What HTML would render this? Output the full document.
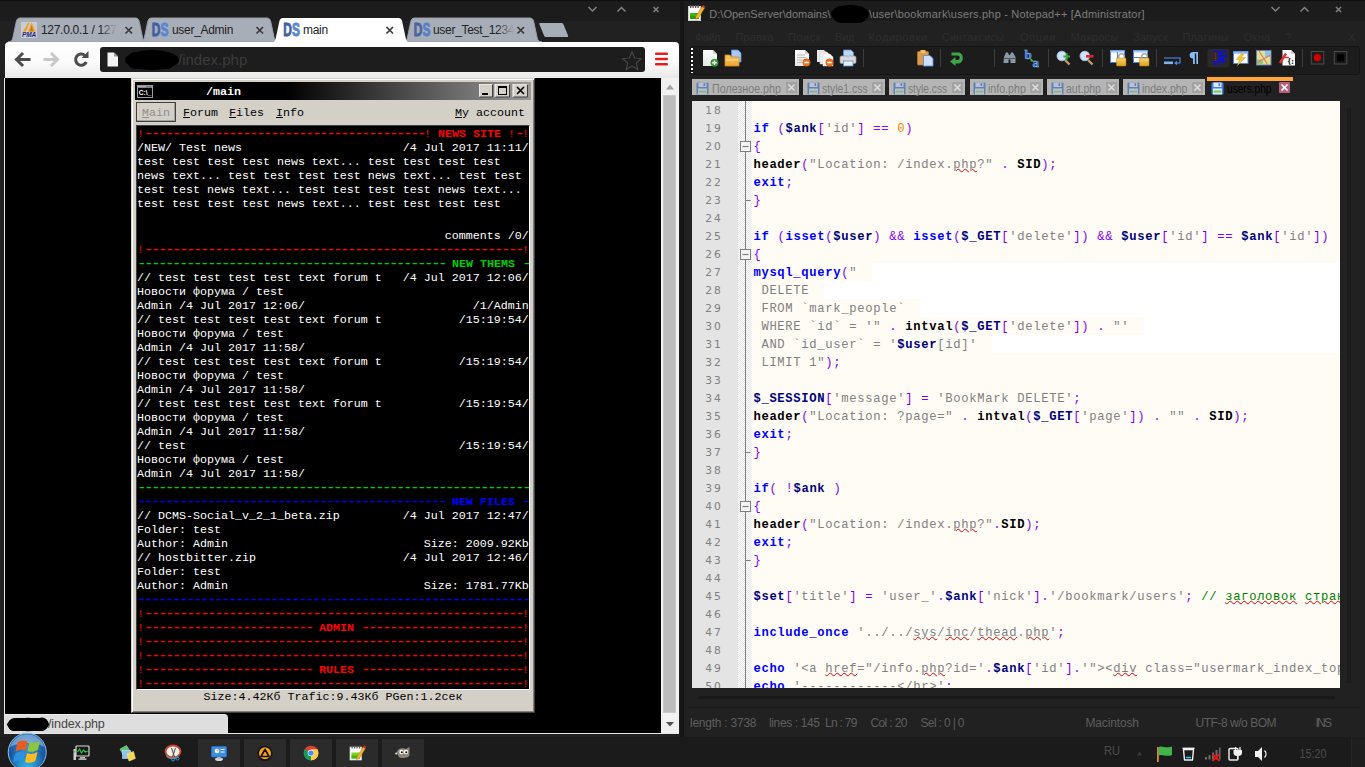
<!DOCTYPE html>
<html lang="ru">
<head>
<meta charset="utf-8">
<title>main</title>
<style>
*{box-sizing:border-box;margin:0;padding:0}
html,body{width:1365px;height:767px;overflow:hidden;background:#1d1d1d}
body{position:relative;font-family:"Liberation Sans",sans-serif;font-size:12px;color:#222}
.abs{position:absolute}
/* ---------- chrome window ---------- */
#chrome{position:absolute;left:0;top:0;width:683px;height:737px;background:linear-gradient(#0e0e0e 0,#0e0e0e 1px,#1c1c1c 1px,#1c1c1c 21px,#212121 21px);overflow:hidden}
#chrome .tabtxt{position:absolute;top:22px;font-size:12px;line-height:16px;color:#222;white-space:nowrap;overflow:hidden;letter-spacing:-0.3px}
#chrome .tabx{position:absolute;top:22px;font-size:13px;line-height:16px;color:#333;font-weight:bold}
#ctoolbar{position:absolute;left:5px;top:42px;width:674px;height:36px;background:linear-gradient(#ffffff 0,#fbfbfb 55%,#e9e9e9 100%);border-radius:4px 4px 0 0}
#omni{position:absolute;left:95px;top:5px;width:545px;height:25px;background:#1d1d1d;border-radius:3px}
#omni .url{position:absolute;left:78px;top:3px;font-size:15px;line-height:20px;color:#3b3b3b}
#page{position:absolute;left:5px;top:78px;width:656px;height:655px;background:#000;overflow:hidden}
#vscroll{position:absolute;left:661px;top:78px;width:18px;height:656px;background:#f1f1f1}
#vscroll .thumb{position:absolute;left:2px;top:17px;width:13px;height:618px;background:#bcbcbc;border:1px solid #c8c8c8}
#bubble{position:absolute;left:5px;top:714px;width:223px;height:19px;background:#dedede;border-top-right-radius:4px;font-size:12.500px;line-height:20px;color:#444;border-top:1px solid #ececec}
#pgline{position:absolute;left:4px;top:733px;width:675px;height:1px;background:#e6e6e6}
#pgleft{position:absolute;left:4px;top:78px;width:1px;height:656px;background:#e6e6e6}
/* ---------- dcms window ---------- */
#dw{position:absolute;left:126px;top:0;width:404px;height:635px;background:#d4d0c8;border:1px solid #d4d0c8;border-right-color:#404040;border-bottom-color:#404040;box-shadow:inset 1px 1px 0 #fff,inset -1px -1px 0 #808080}
#dw .tbar{position:absolute;left:3px;top:3px;width:396px;height:18px;background:linear-gradient(90deg,#000 0,#000 38%,#9a9a9a 100%)}
#dw .ttl{position:absolute;left:71px;top:3px;font:bold 11.67px/14px "Liberation Mono",monospace;color:#fff}
#dw .menu{position:absolute;top:27px;font:11.67px/14px "Liberation Mono",monospace;color:#000;white-space:pre}
#dw .menu u{text-decoration:underline}
#con{position:absolute;left:4px;top:46px;width:394px;height:565px;background:#000;border:1px solid #404040;border-right-color:#fff;border-bottom-color:#fff;overflow:hidden}
#con pre{position:absolute;left:0;margin-top:1px;font:11.67px/14px "Liberation Mono",monospace;color:#fff;white-space:pre;letter-spacing:0}
#con .d{font-size:16px;letter-spacing:-2.6px;line-height:0;vertical-align:-1px}
#con .r{color:#f00}#con .g{color:#0c0}#con .b{color:#00f}
#dw .foot{position:absolute;left:0;top:611px;width:402px;text-align:center;font:11.67px/14px "Liberation Mono",monospace;color:#000}
/* ---------- taskbar ---------- */
#task{position:absolute;left:0;top:737px;width:1365px;height:30px;background:#1b1b1b}
#task .run{position:absolute;top:1px;width:42px;height:29px;background:#2b2b2b}
/* ---------- notepad++ ---------- */
#npp{position:absolute;left:683px;top:0;width:682px;height:737px;background:linear-gradient(#0e0e0e 0,#0e0e0e 1px,#1c1c1c 1px,#1c1c1c 21px,#212121 21px);overflow:hidden}
#npp .title{position:absolute;top:5px;font-size:11px;line-height:18px;color:#7d7d7d;white-space:pre}
#npp .mi{position:absolute;top:28px;font-size:11px;line-height:18px;color:#2e2e2e;white-space:pre}
#npp .ntab{position:absolute;top:79px;height:16px;background:#b5b5b5}
#npp .ntxt{position:absolute;top:81px;transform-origin:0 50%;font-size:13px;line-height:16px;color:#7c7c7c;white-space:pre}
#ed{position:absolute;left:9px;top:101px;width:648px;height:587px;background:#fffcf5;overflow:hidden}
#ed .ln{position:absolute;left:0;top:0;width:46px;height:100%;background:#e4e4e4}
#ed .fm{position:absolute;left:46px;top:0;width:14px;height:100%;background:conic-gradient(#e4e4e4 25%,#fff 0 50%,#e4e4e4 0 75%,#fff 0) 0 0/2px 2px}
#ed .num{position:absolute;left:0;margin-top:1px;width:30.5px;text-align:right;font:10.7px/18px "DejaVu Sans","Liberation Sans",sans-serif;color:#808080;letter-spacing:1.8px}
#ed .cl{position:absolute;left:61.400px;margin-top:1px;height:18px;font:12.200px/18px "Liberation Mono",monospace;letter-spacing:0.680px;white-space:pre;color:#000}
#ed .k{color:#00f;font-weight:bold}#ed .v{color:#000080;font-weight:bold}#ed .s{color:#808080}
#ed .o{color:#8000ff}#ed .n{color:#ff8000}#ed .f{color:#000;font-weight:bold}#ed .c{color:#008000}
#ed .sq{text-decoration:underline wavy #e00000;text-decoration-thickness:1px;text-underline-offset:0px}
#nstatus{position:absolute;left:0;top:708px;width:682px;height:29px;font-size:12px;line-height:31px;color:#5e5e5e}
#nstatus span{position:absolute;top:0;white-space:pre}
</style>
</head>
<body>
<!--CHROME-->
<div id="chrome">
<svg class="abs" style="left:0;top:0" width="683" height="43" viewBox="0 0 683 43">

<!-- inactive tabs -->
<path d="M402.5 42 C405.5 42 406.5 40.5 407.3 38 L410.8 21.500 C411.3 19.500 412.3 18 414.5 18 L530.0 18 C532.2 18 533.2 19.500 533.7 21.500 L537.2 38 C538.0 40.500 539.0 42 542.0 42 Z" fill="#a8aeb8" stroke="#979da7" stroke-width="1"/>
<path d="M139.5 42 C142.5 42 143.5 40.5 144.3 38 L147.8 21.500 C148.3 19.500 149.3 18 151.5 18 L267.0 18 C269.2 18 270.2 19.500 270.7 21.500 L274.2 38 C275.0 40.500 276.0 42 279.0 42 Z" fill="#a8aeb8" stroke="#979da7" stroke-width="1"/>
<path d="M8.0 42 C11.0 42 12.0 40.5 12.8 38 L16.3 21.500 C16.8 19.500 17.8 18 20.0 18 L135.5 18 C137.7 18 138.7 19.500 139.2 21.500 L142.7 38 C143.5 40.500 144.5 42 147.5 42 Z" fill="#a8aeb8" stroke="#979da7" stroke-width="1"/>
<!-- active tab -->
<path d="M271.0 43 C274.0 43 275.0 40.5 275.8 38 L279.3 21.500 C279.8 19.500 280.8 18 283.0 18 L398.5 18 C400.7 18 401.7 19.500 402.2 21.500 L405.7 38 C406.5 40.500 407.5 43 410.5 43 Z" fill="#ffffff"/>
<!-- new tab button -->
<path d="M539.500 24.500 C539 23.500 539.500 23 540.500 23 L561 23 C562.500 23 563 23.500 563.500 24.500 L568 35.500 C568.400 36.800 568 37 567 37 L546.500 37 C545 37 544.500 36.500 544 35.500 Z" fill="#a8aeb8"/>
<!-- window controls -->
<g fill="none" stroke="#808080" stroke-width="1.5">
<path d="M588.500 7 L592.500 11 L596.500 7"/>
<path d="M617.500 11.500 L621.500 7.500 L625.500 11.500"/>
<path d="M653.500 7 L658.500 12 M658.500 7 L653.500 12"/>
</g>
<!-- PMA favicon -->
<rect x="21" y="22" width="16" height="16" fill="#c9ccd3"/>
<path d="M23 31.500 L28 23 L29.500 23 L26 31.500 Z M28 31.500 L31.500 22.500 L35.500 31.500 Z" fill="#f0a020"/>
<path d="M29.700 31.500 L31.500 25 L33.500 31.500 Z" fill="#c77c0c"/>
<!-- DS favicons -->
<g style="font-family:'Liberation Sans',sans-serif;font-weight:bold;font-size:17.500px" stroke-width="0.900" transform="scale(0.68 1)">
<text x="223" y="36.500" fill="#3f5f9f" stroke="#3f5f9f">D</text><text x="236" y="36.500" fill="#5b86d2" stroke="#5b86d2">S</text>
<text x="416.500" y="36.500" fill="#3f5f9f" stroke="#3f5f9f">D</text><text x="429.500" y="36.500" fill="#5b86d2" stroke="#5b86d2">S</text>
<text x="608.500" y="36.500" fill="#4a64a0" stroke="#4a64a0">D</text><text x="621.500" y="36.500" fill="#5a80cc" stroke="#5a80cc">S</text>
</g>
</svg>
<div class="abs" style="left:21px;top:32px;width:16px;font:bold 6.500px/6px 'Liberation Sans',sans-serif;color:#2a2a7a;letter-spacing:-0.2px;text-align:center;font-style:italic">PMA</div>
<div class="tabtxt" style="left:41px;width:75px">127.0.0.1 / 127.</div>
<div class="tabtxt" style="left:172px">user_Admin</div>
<div class="tabtxt" style="left:303px">main</div>
<div class="tabtxt" style="left:433px;width:81px">user_Test_1234</div>
<div class="abs" style="left:100px;top:20px;width:17px;height:20px;background:linear-gradient(90deg,rgba(168,174,184,0),#a8aeb8)"></div>
<div class="abs" style="left:497px;top:20px;width:17px;height:20px;background:linear-gradient(90deg,rgba(168,174,184,0),#a8aeb8)"></div>
<svg class="abs" style="left:0;top:0" width="683" height="43" viewBox="0 0 683 43"><g fill="none" stroke="#3a3a3a" stroke-width="1.700">
<path d="M125.500 27 L132 33.500 M132 27 L125.500 33.500"/>
<path d="M256.500 27 L263 33.500 M263 27 L256.500 33.500"/>
<path d="M386.500 27 L393 33.500 M393 27 L386.500 33.500"/>
<path d="M517.500 27 L524 33.500 M524 27 L517.500 33.500"/>
</g></svg>

<div id="ctoolbar">
<svg class="abs" style="left:0;top:-1px" width="674" height="37" viewBox="0 0 674 37">
<!-- back -->
<path d="M11.500 18.500 L17 13 M11.500 18.500 L17 24 M12 18.500 L24 18.500" fill="none" stroke="#4c4c4c" stroke-width="3" stroke-linecap="square"/>
<!-- forward -->
<path d="M52.500 18.500 L47 13 M52.500 18.500 L47 24 M52 18.500 L40 18.500" fill="none" stroke="#c8c8c8" stroke-width="3" stroke-linecap="square"/>
<!-- reload -->
<path d="M79.800 14.300 A5.600 5.600 0 1 0 81.300 21" fill="none" stroke="#4c4c4c" stroke-width="3"/>
<path d="M76.500 17 L83.500 17 L83.500 10 Z" fill="#4c4c4c"/>
<!-- hamburger -->
<g fill="#e02020"><rect x="650" y="11.500" width="13" height="2.600" rx="1"/><rect x="650" y="16.700" width="13" height="2.600" rx="1"/><rect x="650" y="21.900" width="13" height="2.600" rx="1"/></g>
</svg>
<div id="omni">
<svg class="abs" style="left:0;top:-0.5px" width="545" height="26" viewBox="0 0 545 26">
<path d="M7.500 5.500 L14 5.500 L18 9.500 L18 19.500 L7.500 19.500 Z" fill="#f4f4f4"/>
<path d="M14 5.500 L14 9.500 L18 9.500 Z" fill="#9a9a9a"/>
<ellipse cx="52" cy="13" rx="27" ry="10" fill="#000"/>
<rect x="28" y="5" width="46" height="17" rx="7" fill="#000"/>
<path d="M532 4.500 L534.600 11 L541.500 11.500 L536.200 16 L538 22.800 L532 19 L526 22.800 L527.800 16 L522.500 11.500 L529.400 11 Z" fill="none" stroke="#444" stroke-width="1.200" stroke-linejoin="round"/>
</svg>
<div class="url">/index.php</div>
</div>

</div>
<div id="page">
<div id="dw">
<div class="tbar">
<svg class="abs" style="left:2px;top:3px" width="16" height="13" viewBox="0 0 16 13"><rect x="0.5" y="0.5" width="15" height="12" fill="#000" stroke="#9c9ca4"/><rect x="1" y="1" width="14" height="1.800" fill="#a8a8b0"/><rect x="9.500" y="1.300" width="1" height="1" fill="#334"/><rect x="11.500" y="1.300" width="1" height="1" fill="#334"/><rect x="13.300" y="1.300" width="1" height="1" fill="#334"/><g style="font:bold 6.500px 'Liberation Sans',sans-serif" fill="#fff"><text x="1.800" y="10" textLength="12.500" lengthAdjust="spacingAndGlyphs">C:\_</text></g></svg>
<div class="ttl">/main</div>
<svg class="abs" style="left:344px;top:2px" width="50" height="14" viewBox="0 0 50 14">
<g><rect x="0" y="0" width="14" height="13" fill="#d4d0c8"/><path d="M0 13 L0 0 L14 0" fill="none" stroke="#fff"/><path d="M0.5 13 L13.500 13 L13.500 0.500" fill="none" stroke="#404040"/><rect x="3" y="9" width="6" height="2" fill="#000"/></g>
<g transform="translate(16 0)"><rect x="0" y="0" width="15" height="13" fill="#d4d0c8"/><path d="M0 13 L0 0 L15 0" fill="none" stroke="#fff"/><path d="M0.5 13 L14.500 13 L14.500 0.500" fill="none" stroke="#404040"/><rect x="3.500" y="2.500" width="8" height="8" fill="none" stroke="#000"/><rect x="3" y="2" width="9" height="2" fill="#000"/></g>
<g transform="translate(34 0)"><rect x="0" y="0" width="15" height="13" fill="#d4d0c8"/><path d="M0 13 L0 0 L15 0" fill="none" stroke="#fff"/><path d="M0.5 13 L14.500 13 L14.500 0.500" fill="none" stroke="#404040"/><path d="M4 3 L11 10 M11 3 L4 10" stroke="#000" stroke-width="1.600"/></g>
</svg>
</div>
<div class="abs" style="left:4px;top:23px;width:40px;height:20px;border:1px solid #404040;box-shadow:inset -1px -1px 0 #a0a0a0"></div>
<div class="menu" style="left:10px;color:#8e8e8e"><u>M</u>ain</div>
<div class="menu" style="left:51px"><u>F</u>orum</div>
<div class="menu" style="left:97px"><u>F</u>iles</div>
<div class="menu" style="left:144px"><u>I</u>nfo</div>
<div class="menu" style="left:323px"><u>M</u>y account</div>
<div id="con">
<pre style="top:0"><span class="r">!<span class="d">----------------------------------------</span>! <b>NEWS SITE</b> !<span class="d">-</span>!</span>
/NEW/ Test news                       /4 Jul 2017 11:11/
test test test test news text... test test test test
news text... test test test test news text... test test
test test news text... test test test test news text...
test test test test news text... test test test test</pre>
<pre style="top:102px">                                            comments /0/</pre>
<pre style="top:116px"><span class="r">!<span class="d">------------------------------------------------------</span>!</span>
<span class="g"><span class="d">--------------------------------------------</span> <b>NEW THEMS</b> <span class="d">-</span></span>
// test test test test text forum t   /4 Jul 2017 12:06/
Новости форума / test
Admin /4 Jul 2017 12:06/                        /1/Admin
// test test test test text forum t           /15:19:54/
Новости форума / test
Admin /4 Jul 2017 11:58/
// test test test test text forum t           /15:19:54/
Новости форума / test
Admin /4 Jul 2017 11:58/
// test test test test text forum t           /15:19:54/
Новости форума / test
Admin /4 Jul 2017 11:58/
// test                                       /15:19:54/
Новости форума / test
Admin /4 Jul 2017 11:58/
<span class="g"><span class="d">--------------------------------------------------------</span></span>
<span class="b"><span class="d">--------------------------------------------</span> <b>NEW FILES</b> <span class="d">-</span></span>
// DCMS-Social_v_2_1_beta.zip         /4 Jul 2017 12:47/
Folder: test
Author: Admin                            Size: 2009.92Kb
// hostbitter.zip                     /4 Jul 2017 12:46/
Folder: test
Author: Admin                            Size: 1781.77Kb
<span class="b"><span class="d">--------------------------------------------------------</span></span>
<span class="r">!<span class="d">------------------------------------------------------</span>!</span>
<span class="r">!<span class="d">------------------------</span> <b>ADMIN</b> <span class="d">-----------------------</span>!</span>
<span class="r">!<span class="d">------------------------------------------------------</span>!</span>
<span class="r">!<span class="d">------------------------------------------------------</span>!</span>
<span class="r">!<span class="d">------------------------</span> <b>RULES</b> <span class="d">-----------------------</span>!</span>
<span class="r">!<span class="d">------------------------------------------------------</span>!</span></pre>
</div>
<div class="foot">Size:4.42Кб Trafic:9.43Кб PGen:1.2сек</div>
</div>

</div>
<div id="vscroll"><div class="thumb"></div>
<svg class="abs" style="left:0;top:0" width="18" height="656" viewBox="0 0 18 656"><path d="M5 11.500 L9 6.500 L13 11.500 Z" fill="#a3a3a3"/><path d="M5 644 L9 648.500 L13 644 Z" fill="#505050"/></svg>

</div>
<div class="abs" style="left:680px;top:1px;width:3px;height:736px;background:#161616"></div>
<div id="pgline"></div><div id="pgleft"></div>
<div id="bubble">
<svg class="abs" style="left:0;top:-1px" width="50" height="20" viewBox="0 0 50 20"><ellipse cx="23" cy="10.500" rx="21" ry="6.800" fill="#000"/><rect x="3" y="4" width="40" height="13" rx="6.500" fill="#000"/><circle cx="9" cy="11" r="6" fill="#000"/><circle cx="37" cy="10" r="6.500" fill="#000"/></svg><span style="position:absolute;left:43px;top:-1px;letter-spacing:-0.1px">/index.php</span>

</div>
</div>
<!--NPP-->
<div id="npp">
<div class="abs" style="left:0;top:0;width:1px;height:737px;background:#141414"></div>
<svg class="abs" style="left:5px;top:4px" width="18" height="18" viewBox="0 0 18 18">
<rect x="0.5" y="2.500" width="12" height="14" fill="#fff" stroke="#cfcfcf"/>
<g fill="#555"><rect x="2" y="1" width="1.300" height="3"/><rect x="4.500" y="1" width="1.300" height="3"/><rect x="7" y="1" width="1.300" height="3"/><rect x="9.500" y="1" width="1.300" height="3"/></g>
<rect x="2" y="9" width="9" height="6" fill="#3cb414"/><rect x="2" y="12" width="9" height="3" fill="#2a9a0a"/>
<path d="M8 12.500 L14 2.500 L16.500 4 L10.500 14 L7.600 15.200 Z" fill="#f3b52e" stroke="#b77a12" stroke-width="0.600"/>
<path d="M14 2.500 L15 1 L17.300 2.400 L16.500 4 Z" fill="#d8262c"/>
</svg>
<div class="title" style="left:26.3px;letter-spacing:0.01px;">D:\OpenServer\domains\</div>
<div class="title" style="left:186.0px;letter-spacing:0.20px;">\user\bookmark\users.php - Notepad++ [Administrator]</div>
<svg class="abs" style="left:146px;top:3px" width="44" height="22" viewBox="0 0 44 22"><ellipse cx="21" cy="11" rx="19" ry="9" fill="#000"/><rect x="4" y="3" width="34" height="17" rx="8" fill="#000"/></svg>
<svg class="abs" style="left:580px;top:0" width="102" height="20" viewBox="0 0 102 20"><g fill="none" stroke="#808080" stroke-width="1.500">
<path d="M8.500 7 L12.500 11 L16.500 7"/><path d="M37.500 11.500 L41.500 7.500 L45.500 11.500"/><path d="M73 7 L78 12 M78 7 L73 12"/></g></svg>
<div class="mi" style="left:12.0px;letter-spacing:-0.52px;">Файл</div>
<div class="mi" style="left:52.5px;letter-spacing:0.17px;">Правка</div>
<div class="mi" style="left:105.0px;letter-spacing:0.50px;">Поиск</div>
<div class="mi" style="left:152.0px;letter-spacing:-0.20px;">Вид</div>
<div class="mi" style="left:185.5px;letter-spacing:0.58px;">Кодировки</div>
<div class="mi" style="left:258.7px;letter-spacing:0.12px;">Синтаксисы</div>
<div class="mi" style="left:337.0px;letter-spacing:0.57px;">Опции</div>
<div class="mi" style="left:387.6px;letter-spacing:0.32px;">Макросы</div>
<div class="mi" style="left:450.3px;letter-spacing:-0.00px;">Запуск</div>
<div class="mi" style="left:499.4px;letter-spacing:0.28px;">Плагины</div>
<div class="mi" style="left:560.7px;letter-spacing:0.35px;">Окна</div>
<div class="mi" style="left:602.3px;letter-spacing:0.00px;">?</div>
<div class="mi" style="left:665.0px;letter-spacing:0.00px;">X</div>
<div class="abs" style="left:7px;top:46px;width:670px;height:29px;border:1px solid #151515;border-radius:3px;background:#1c1c1c"></div>
<div class="abs" style="left:8px;top:48px;width:2px;height:25px;background:repeating-linear-gradient(#fff 0,#fff 2px,transparent 2px,transparent 4px)"></div>
<svg class="abs" style="left:0;top:44px" width="682" height="34" viewBox="683 44 682 34">
<defs>
<linearGradient id="gpg" x1="0" y1="0" x2="0" y2="1"><stop offset="0" stop-color="#fff"/><stop offset="1" stop-color="#e6e6e6"/></linearGradient>
<linearGradient id="gfo" x1="0" y1="0" x2="0" y2="1"><stop offset="0" stop-color="#f7c35a"/><stop offset="1" stop-color="#f0a630"/></linearGradient>
<linearGradient id="glk" x1="0" y1="0" x2="0" y2="1"><stop offset="0" stop-color="#f8d470"/><stop offset="1" stop-color="#e0a020"/></linearGradient>
</defs>
<!-- separators -->
<g stroke="#3c3c3c" stroke-width="1"><path d="M863.500 49 V67 M940.500 49 V67 M994.500 49 V67 M1048.500 49 V67 M1102.500 49 V67 M1156.500 49 V67 M1302.500 49 V67"/></g>
<!-- new -->
<path d="M703 50 H713 L717 54 V66 H703 Z" fill="url(#gpg)"/><path d="M713 50 V54 H717 Z" fill="#d0d0d0"/>
<circle cx="714.500" cy="62.800" r="3.700" fill="#3aa53a" stroke="#2a7f2a" stroke-width="0.600"/><path d="M712.300 62.800 H716.700 M714.500 60.600 V65" stroke="#fff" stroke-width="1.400"/>
<!-- open -->
<path d="M731.500 50 H738 L741 53 V62 H731.500 Z" fill="#a9c8f5" stroke="#5b8ee0" stroke-width="0.800"/>
<path d="M725 55 H730 L731.500 57 H739 V66 H725 Z" fill="url(#gfo)" stroke="#d68a1c" stroke-width="0.800"/><path d="M725.500 60 H738.500" stroke="#fbe2a5" stroke-width="1"/>
<!-- close -->
<path d="M795 50 H805 L809 54 V66 H795 Z" fill="url(#gpg)"/><path d="M805 50 V54 H809 Z" fill="#cfcfcf"/>
<path d="M797 55 H805 M797 57.500 H806 M797 60 H803 M797 62.500 H802" stroke="#b5b5b5" stroke-width="0.900"/>
<circle cx="806.500" cy="62.500" r="3.700" fill="#ee7420" stroke="#c45510" stroke-width="0.600"/><path d="M804.300 62.500 H808.700" stroke="#fff" stroke-width="1.500"/>
<!-- close all -->
<path d="M817 50 H824 L827 53 V62 H817 Z" fill="#e9e9e9"/><path d="M820 52 H827 L830 55 V64 H820 Z" fill="#f1f1f1" stroke="#cfcfcf" stroke-width="0.500"/><path d="M823 54 H830 L833 57 V66 H823 Z" fill="#fff" stroke="#cfcfcf" stroke-width="0.500"/>
<circle cx="829.500" cy="62.500" r="3.700" fill="#ee7420" stroke="#c45510" stroke-width="0.600"/><path d="M827.300 62.500 H831.700" stroke="#fff" stroke-width="1.500"/>
<!-- print -->
<path d="M843.500 50 H851 L853.500 52.500 V57 H843.500 Z" fill="#bcd7f7" stroke="#5b8ee0" stroke-width="0.800"/>
<rect x="840" y="56" width="16" height="7.500" rx="1.500" fill="#d9d9d9" stroke="#9a9a9a" stroke-width="0.700"/><rect x="843.500" y="61" width="9.500" height="5" fill="#e8f0fb" stroke="#5b8ee0" stroke-width="0.800"/>
<!-- paste -->
<rect x="917.500" y="51.500" width="11" height="13.500" rx="1" fill="#dc9a4c" stroke="#b97528" stroke-width="0.800"/><rect x="920.500" y="50" width="5" height="3" fill="#f2c24e"/>
<path d="M923.500 55.500 H930 L933 58.500 V66 H923.500 Z" fill="#cfe0fb" stroke="#5b8ee0" stroke-width="0.900"/>
<!-- undo/redo green arrow -->
<path d="M950 61.500 L955.500 57 V60 H957.500 C960.500 60 960.500 55.500 957.500 55.500 H951.500 V52.500 H958 C964.500 52.500 964.500 63.500 958 63.500 H955.500 V66 Z" fill="#3ea349"/>
<!-- find (binoculars) -->
<path d="M1004 57 L1006 52.500 H1008 L1009 55 H1010 L1011 52.500 H1013 L1015.500 57 V63 H1010.500 V59.500 H1008.500 V63 H1003.500 Z" fill="#8d98a6"/><path d="M1003.500 58.500 H1015.500" stroke="#4d5560" stroke-width="1"/>
<!-- replace -->
<g style="font:bold 13px 'Liberation Serif',serif" fill="#2f74dc" stroke="#9cc0f5" stroke-width="0.400"><text x="1024.500" y="58.500">b</text><text x="1032.500" y="66.500">a</text></g><path d="M1029.500 57 L1034.500 61.500 L1031 61.800 Z" fill="#48a848"/>
<!-- zoom in -->
<path d="M1065 60 L1069.500 64.500" stroke="#c79a62" stroke-width="2.400"/><circle cx="1061.800" cy="56" r="4.800" fill="#cfe1f7" stroke="#a7c4ea" stroke-width="0.800"/><path d="M1063.500 56.500 H1070 M1066.700 53.300 V59.800" stroke="#3aa53a" stroke-width="2"/>
<!-- zoom out -->
<path d="M1088 60 L1092.500 64.500" stroke="#c79a62" stroke-width="2.400"/><circle cx="1084.800" cy="56" r="4.800" fill="#cfe1f7" stroke="#a7c4ea" stroke-width="0.800"/><rect x="1086" y="55" width="7.500" height="2.600" fill="#e8222a"/>
<!-- sync v -->
<rect x="1110.500" y="50.500" width="14" height="12" fill="#fff" stroke="#4f80d6" stroke-width="1"/><rect x="1110.500" y="50.500" width="14" height="2" fill="#a9c6f2"/><path d="M1117.500 52 V62" stroke="#4f80d6"/>
<path d="M1118.700 58 V56.500 A2.800 2.800 0 0 1 1124.300 56.500 V58" fill="none" stroke="#a8a8a8" stroke-width="1.500"/><rect x="1116.500" y="58" width="9.500" height="8" rx="0.800" fill="url(#glk)" stroke="#b8860b" stroke-width="0.500"/>
<!-- sync h -->
<rect x="1133.500" y="50.500" width="14" height="12" fill="#fff" stroke="#4f80d6" stroke-width="1"/><rect x="1133.500" y="50.500" width="14" height="2" fill="#a9c6f2"/><path d="M1134 57.500 H1147" stroke="#4f80d6"/>
<path d="M1141.700 58 V56.500 A2.800 2.800 0 0 1 1147.300 56.500 V58" fill="none" stroke="#a8a8a8" stroke-width="1.500"/><rect x="1139.500" y="58" width="9.500" height="8" rx="0.800" fill="url(#glk)" stroke="#b8860b" stroke-width="0.500"/>
<!-- wrap -->
<path d="M1164 52.500 H1172 M1164 55 H1170" stroke="#1a1a1a" stroke-width="1.200"/><path d="M1164 58 H1180 V63 H1176" fill="none" stroke="#4f8ff0" stroke-width="1.100"/><path d="M1174 63 L1177 60.800 V65.200 Z" fill="#4f8ff0"/><rect x="1164" y="61.500" width="9" height="2.600" fill="#7ab4f0"/>
<!-- pilcrow -->
<path d="M1198 52 V64 H1196.300 V53.500 H1194.800 V64 H1193 V58.500 C1188.500 58.500 1188.500 52 1193 52 Z" fill="#86bdf5"/>
<!-- indent guide (pressed) -->
<rect x="1207.500" y="49" width="22" height="18.500" rx="2" fill="#2a2a2a"/>
<g fill="#0a0af0"><rect x="1213" y="51" width="14" height="1.300"/><rect x="1218" y="53" width="4" height="1.300"/><rect x="1218" y="55" width="9" height="2.300"/><rect x="1218" y="58.500" width="6" height="2"/><rect x="1213" y="61" width="14" height="1.300"/><rect x="1213" y="63.200" width="4" height="1.300"/><rect x="1218" y="63.200" width="2" height="1.300"/><rect x="1218.500" y="65.300" width="1" height="1"/></g>
<path d="M1215.500 53 V61" stroke="#e01010" stroke-width="1.200" stroke-dasharray="1.200 1.200"/>
<!-- user lang -->
<rect x="1233.500" y="51.500" width="14.500" height="12" fill="#fff" stroke="#4f80d6" stroke-width="1"/><rect x="1233.500" y="51.500" width="14.500" height="2.200" fill="#8db4ee"/>
<path d="M1241 54 L1236 59.500 H1239.500 L1237.500 65.500 L1245.500 57.500 H1241.500 L1244 54 Z" fill="#f3c644" stroke="#d8a21a" stroke-width="0.500"/>
<!-- doc map -->
<rect x="1256.500" y="50.500" width="14.500" height="14.500" fill="#d9e58a" stroke="#6a78c8" stroke-width="1"/><rect x="1265" y="51" width="5.500" height="6" fill="#8ec2e8"/><rect x="1257" y="59.500" width="6" height="5" fill="#8fc97a"/><path d="M1259 51 L1267.500 64.500 M1257 62.500 L1270.500 55" stroke="#f07070" stroke-width="1.100"/>
<!-- func list -->
<path d="M1282.500 50 H1291 L1295 54 V65.500 H1282.500 Z" fill="#fff"/><path d="M1291 50 V54 H1295 Z" fill="#cfcfcf"/>
<path d="M1280 63 L1286 53.500" stroke="#e5303a" stroke-width="2.400"/><path d="M1283.500 57.500 H1289" stroke="#e5303a" stroke-width="1.400"/>
<g style="font:bold 9px 'Liberation Serif',serif" fill="#000"><text x="1287.500" y="64">{:</text></g>
<!-- record -->
<rect x="1311.300" y="51.500" width="12.500" height="12.500" fill="#1c1c1c" stroke="#4a4a4a" stroke-width="1"/><circle cx="1317.500" cy="57.700" r="3.600" fill="#d40000"/>
<!-- stop -->
<rect x="1334.300" y="51.500" width="12.500" height="12.500" fill="#1c1c1c" stroke="#4a4a4a" stroke-width="1"/><rect x="1337" y="54.200" width="7.200" height="7.200" fill="#000"/>
</svg>

<div class="ntab" style="left:8.8px;width:107.0px"></div>
<svg class="abs" style="left:12.5px;top:82px" width="13" height="13" viewBox="0 0 13 13"><rect x="0.5" y="0.5" width="12" height="12" rx="1" fill="#6680ad"/><rect x="2.500" y="0.500" width="8" height="4.500" fill="#b9c2d4"/><rect x="7.500" y="1.200" width="1.600" height="2.800" fill="#6680ad"/><rect x="2" y="6.500" width="9" height="6" fill="#b9c2d4"/><rect x="2.500" y="8.500" width="8" height="2.200" fill="#94b384"/></svg>
<div class="ntxt" style="left:28.8px;transform:scaleX(0.823)">Полезное.php</div>
<svg class="abs" style="left:102.8px;top:82px" width="11" height="11" viewBox="0 0 11 11"><rect x="0" y="0" width="11" height="11" rx="1" fill="#a3a3a3"/><path d="M2.500 2.500 L8.500 8.500 M8.500 2.500 L2.500 8.500" stroke="#dcdcdc" stroke-width="1.700"/></svg>
<div class="ntab" style="left:120.3px;width:81.5px"></div>
<svg class="abs" style="left:124.0px;top:82px" width="13" height="13" viewBox="0 0 13 13"><rect x="0.5" y="0.5" width="12" height="12" rx="1" fill="#6680ad"/><rect x="2.500" y="0.500" width="8" height="4.500" fill="#b9c2d4"/><rect x="7.500" y="1.200" width="1.600" height="2.800" fill="#6680ad"/><rect x="2" y="6.500" width="9" height="6" fill="#b9c2d4"/><rect x="2.500" y="8.500" width="8" height="2.200" fill="#94b384"/></svg>
<div class="ntxt" style="left:138.6px;transform:scaleX(0.799)">style1.css</div>
<svg class="abs" style="left:188.8px;top:82px" width="11" height="11" viewBox="0 0 11 11"><rect x="0" y="0" width="11" height="11" rx="1" fill="#a3a3a3"/><path d="M2.500 2.500 L8.500 8.500 M8.500 2.500 L2.500 8.500" stroke="#dcdcdc" stroke-width="1.700"/></svg>
<div class="ntab" style="left:206.0px;width:76.0px"></div>
<svg class="abs" style="left:209.7px;top:82px" width="13" height="13" viewBox="0 0 13 13"><rect x="0.5" y="0.5" width="12" height="12" rx="1" fill="#6680ad"/><rect x="2.500" y="0.500" width="8" height="4.500" fill="#b9c2d4"/><rect x="7.500" y="1.200" width="1.600" height="2.800" fill="#6680ad"/><rect x="2" y="6.500" width="9" height="6" fill="#b9c2d4"/><rect x="2.500" y="8.500" width="8" height="2.200" fill="#94b384"/></svg>
<div class="ntxt" style="left:224.8px;transform:scaleX(0.786)">style.css</div>
<svg class="abs" style="left:269.0px;top:82px" width="11" height="11" viewBox="0 0 11 11"><rect x="0" y="0" width="11" height="11" rx="1" fill="#a3a3a3"/><path d="M2.500 2.500 L8.500 8.500 M8.500 2.500 L2.500 8.500" stroke="#dcdcdc" stroke-width="1.700"/></svg>
<div class="ntab" style="left:286.5px;width:73.5px"></div>
<svg class="abs" style="left:290.2px;top:82px" width="13" height="13" viewBox="0 0 13 13"><rect x="0.5" y="0.5" width="12" height="12" rx="1" fill="#6680ad"/><rect x="2.500" y="0.500" width="8" height="4.500" fill="#b9c2d4"/><rect x="7.500" y="1.200" width="1.600" height="2.800" fill="#6680ad"/><rect x="2" y="6.500" width="9" height="6" fill="#b9c2d4"/><rect x="2.500" y="8.500" width="8" height="2.200" fill="#94b384"/></svg>
<div class="ntxt" style="left:304.5px;transform:scaleX(0.817)">info.php</div>
<svg class="abs" style="left:347.0px;top:82px" width="11" height="11" viewBox="0 0 11 11"><rect x="0" y="0" width="11" height="11" rx="1" fill="#a3a3a3"/><path d="M2.500 2.500 L8.500 8.500 M8.500 2.500 L2.500 8.500" stroke="#dcdcdc" stroke-width="1.700"/></svg>
<div class="ntab" style="left:364.0px;width:72.0px"></div>
<svg class="abs" style="left:367.7px;top:82px" width="13" height="13" viewBox="0 0 13 13"><rect x="0.5" y="0.5" width="12" height="12" rx="1" fill="#6680ad"/><rect x="2.500" y="0.500" width="8" height="4.500" fill="#b9c2d4"/><rect x="7.500" y="1.200" width="1.600" height="2.800" fill="#6680ad"/><rect x="2" y="6.500" width="9" height="6" fill="#b9c2d4"/><rect x="2.500" y="8.500" width="8" height="2.200" fill="#94b384"/></svg>
<div class="ntxt" style="left:382.6px;transform:scaleX(0.805)">aut.php</div>
<svg class="abs" style="left:423.0px;top:82px" width="11" height="11" viewBox="0 0 11 11"><rect x="0" y="0" width="11" height="11" rx="1" fill="#a3a3a3"/><path d="M2.500 2.500 L8.500 8.500 M8.500 2.500 L2.500 8.500" stroke="#dcdcdc" stroke-width="1.700"/></svg>
<div class="ntab" style="left:440.0px;width:81.8px"></div>
<svg class="abs" style="left:443.7px;top:82px" width="13" height="13" viewBox="0 0 13 13"><rect x="0.5" y="0.5" width="12" height="12" rx="1" fill="#6680ad"/><rect x="2.500" y="0.500" width="8" height="4.500" fill="#b9c2d4"/><rect x="7.500" y="1.200" width="1.600" height="2.800" fill="#6680ad"/><rect x="2" y="6.500" width="9" height="6" fill="#b9c2d4"/><rect x="2.500" y="8.500" width="8" height="2.200" fill="#94b384"/></svg>
<div class="ntxt" style="left:458.6px;transform:scaleX(0.805)">index.php</div>
<svg class="abs" style="left:508.8px;top:82px" width="11" height="11" viewBox="0 0 11 11"><rect x="0" y="0" width="11" height="11" rx="1" fill="#a3a3a3"/><path d="M2.500 2.500 L8.500 8.500 M8.500 2.500 L2.500 8.500" stroke="#dcdcdc" stroke-width="1.700"/></svg>
<div class="abs" style="left:524.0px;top:77px;width:86.0px;height:4px;background:#ffa838"></div>
<svg class="abs" style="left:528.0px;top:82px" width="13" height="13" viewBox="0 0 13 13"><rect x="0.5" y="0.5" width="12" height="12" rx="1" fill="#3f7fe8"/><rect x="2.500" y="0.500" width="8" height="4.500" fill="#dfeaff"/><rect x="7.500" y="1.200" width="1.600" height="2.800" fill="#3f7fe8"/><rect x="2" y="6.500" width="9" height="6" fill="#dfeaff"/><rect x="2.500" y="8.500" width="8" height="2.200" fill="#7ad04a"/></svg>
<div class="ntxt" style="left:544.0px;transform:scaleX(0.779);color:#000">users.php</div>
<svg class="abs" style="left:596.0px;top:82px" width="11" height="11" viewBox="0 0 11 11"><rect x="0" y="0" width="11" height="11" rx="1" fill="#b0627c"/><path d="M2.500 2.500 L8.500 8.500 M8.500 2.500 L2.500 8.500" stroke="#fff" stroke-width="1.700"/></svg>


<div id="ed">
<div class="ln"></div><div class="fm"></div>
<div class="num" style="top:0px">18</div>
<div class="num" style="top:18px">19</div>
<div class="cl" style="top:18px"><span class="k">if</span> <span class="o">(</span><span class="v">$ank</span><span class="o">[</span><span class="s">'id'</span><span class="o">]</span> <span class="o">==</span> <span class="n">0</span><span class="o">)</span></div>
<div class="num" style="top:36px">20</div>
<div class="cl" style="top:36px"><span class="o">{</span></div>
<div class="num" style="top:54px">21</div>
<div class="cl" style="top:54px"><span class="f">header</span><span class="o">(</span><span class="s">"Location: /index.<span class="sq">php</span>?"</span> <span class="o">.</span> <span class="f">SID</span><span class="o">);</span></div>
<div class="num" style="top:72px">22</div>
<div class="cl" style="top:72px"><span class="k">exit</span><span class="o">;</span></div>
<div class="num" style="top:90px">23</div>
<div class="cl" style="top:90px"><span class="o">}</span></div>
<div class="num" style="top:108px">24</div>
<div class="num" style="top:126px">25</div>
<div class="cl" style="top:126px"><span class="k">if</span> <span class="o">(</span><span class="k">isset</span><span class="o">(</span><span class="v">$user</span><span class="o">)</span> <span class="o">&amp;&amp;</span> <span class="k">isset</span><span class="o">(</span><span class="v">$_GET</span><span class="o">[</span><span class="s">'delete'</span><span class="o">])</span> <span class="o">&amp;&amp;</span> <span class="v">$user</span><span class="o">[</span><span class="s">'id'</span><span class="o">]</span> <span class="o">==</span> <span class="v">$ank</span><span class="o">[</span><span class="s">'id'</span><span class="o">])</span></div>
<div class="num" style="top:144px">26</div>
<div class="cl" style="top:144px"><span class="o">{</span></div>
<div class="num" style="top:162px">27</div>
<div class="abs" style="left:180px;top:162px;width:468px;height:18px;background:#fff"></div>
<div class="cl" style="top:162px"><span class="k">mysql_query</span><span class="o">(</span><span class="s">"</span></div>
<div class="num" style="top:180px">28</div>
<div class="abs" style="left:132px;top:180px;width:516px;height:18px;background:#fff"></div>
<div class="cl" style="top:180px"><span class="s"> DELETE</span></div>
<div class="num" style="top:198px">29</div>
<div class="abs" style="left:228px;top:198px;width:420px;height:18px;background:#fff"></div>
<div class="cl" style="top:198px"><span class="s"> FROM `mark_people`</span></div>
<div class="num" style="top:216px">30</div>
<div class="abs" style="left:452px;top:216px;width:196px;height:18px;background:#fff"></div>
<div class="cl" style="top:216px"><span class="s"> WHERE `id` = '"</span> <span class="o">.</span> <span class="f">intval</span><span class="o">(</span><span class="v">$_GET</span><span class="o">[</span><span class="s">'delete'</span><span class="o">])</span> <span class="o">.</span> <span class="s">"'</span></div>
<div class="num" style="top:234px">31</div>
<div class="abs" style="left:300px;top:234px;width:348px;height:18px;background:#fff"></div>
<div class="cl" style="top:234px"><span class="s"> AND `id_user` = '</span><span class="v">$user</span><span class="s">[id]'</span></div>
<div class="num" style="top:252px">32</div>
<div class="cl" style="top:252px"><span class="s"> LIMIT 1"</span><span class="o">);</span></div>
<div class="num" style="top:270px">33</div>
<div class="num" style="top:288px">34</div>
<div class="cl" style="top:288px"><span class="v">$_SESSION</span><span class="o">[</span><span class="s">'message'</span><span class="o">]</span> <span class="o">=</span> <span class="s">'BookMark DELETE'</span><span class="o">;</span></div>
<div class="num" style="top:306px">35</div>
<div class="cl" style="top:306px"><span class="f">header</span><span class="o">(</span><span class="s">"Location: ?page="</span> <span class="o">.</span> <span class="f">intval</span><span class="o">(</span><span class="v">$_GET</span><span class="o">[</span><span class="s">'page'</span><span class="o">])</span> <span class="o">.</span> <span class="s">""</span> <span class="o">.</span> <span class="f">SID</span><span class="o">);</span></div>
<div class="num" style="top:324px">36</div>
<div class="cl" style="top:324px"><span class="k">exit</span><span class="o">;</span></div>
<div class="num" style="top:342px">37</div>
<div class="cl" style="top:342px"><span class="o">}</span></div>
<div class="num" style="top:360px">38</div>
<div class="num" style="top:378px">39</div>
<div class="cl" style="top:378px"><span class="k">if</span><span class="o">(</span> <span class="o">!</span><span class="v">$ank</span> <span class="o">)</span></div>
<div class="num" style="top:396px">40</div>
<div class="cl" style="top:396px"><span class="o">{</span></div>
<div class="num" style="top:414px">41</div>
<div class="cl" style="top:414px"><span class="f">header</span><span class="o">(</span><span class="s">"Location: /index.<span class="sq">php</span>?"</span><span class="o">.</span><span class="f">SID</span><span class="o">);</span></div>
<div class="num" style="top:432px">42</div>
<div class="cl" style="top:432px"><span class="k">exit</span><span class="o">;</span></div>
<div class="num" style="top:450px">43</div>
<div class="cl" style="top:450px"><span class="o">}</span></div>
<div class="num" style="top:468px">44</div>
<div class="num" style="top:486px">45</div>
<div class="cl" style="top:486px"><span class="v">$set</span><span class="o">[</span><span class="s">'title'</span><span class="o">]</span> <span class="o">=</span> <span class="s">'user_'</span><span class="o">.</span><span class="v">$ank</span><span class="o">[</span><span class="s">'nick'</span><span class="o">].</span><span class="s">'/bookmark/users'</span><span class="o">;</span> <span class="c">// <span class="sq">заголовок</span> <span class="sq">страницы</span></span></div>
<div class="num" style="top:504px">46</div>
<div class="num" style="top:522px">47</div>
<div class="cl" style="top:522px"><span class="k">include_once</span> <span class="s">'../../<span class="sq">sys</span>/<span class="sq">inc</span>/<span class="sq">thead</span>.<span class="sq">php</span>'</span><span class="o">;</span></div>
<div class="num" style="top:540px">48</div>
<div class="num" style="top:558px">49</div>
<div class="cl" style="top:558px"><span class="k">echo</span> <span class="s">'&lt;a <span class="sq">href</span>="/info.<span class="sq">php</span>?id='</span><span class="o">.</span><span class="v">$ank</span><span class="o">[</span><span class="s">'id'</span><span class="o">].</span><span class="s">'"&gt;&lt;<span class="sq">div</span> class="usermark_index_top"&gt;'</span><span class="o">;</span></div>
<div class="num" style="top:576px">50</div>
<div class="cl" style="top:576px"><span class="k">echo</span> <span class="s">'------------&lt;/<span class="sq">br</span>&gt;'</span><span class="o">;</span></div>
<svg class="abs" style="left:46px;top:0" width="16" height="587" viewBox="0 0 16 587"><path d="M7.500 0 V587" stroke="#808080" stroke-width="1" fill="none"/><rect x="2.500" y="40.5" width="10" height="10" fill="#f4f4f4" stroke="#808080"/><path d="M4.500 45.5 H10.500" stroke="#808080" stroke-width="1.2"/><rect x="2.500" y="148.5" width="10" height="10" fill="#f4f4f4" stroke="#808080"/><path d="M4.500 153.5 H10.500" stroke="#808080" stroke-width="1.2"/><rect x="2.500" y="400.5" width="10" height="10" fill="#f4f4f4" stroke="#808080"/><path d="M4.500 405.5 H10.500" stroke="#808080" stroke-width="1.2"/><path d="M7.500 99.5 H12.500" stroke="#808080" stroke-width="1"/><path d="M7.500 351.5 H12.500" stroke="#808080" stroke-width="1"/><path d="M7.500 459.5 H12.500" stroke="#808080" stroke-width="1"/></svg>

</div>
<div class="abs" style="left:657px;top:101px;width:18px;height:600px;background:#212121"></div>
<div class="abs" style="left:664px;top:108px;width:4px;height:575px;border:1px solid #191919;background:#1e1e1e"></div>
<div class="abs" style="left:9px;top:688px;width:648px;height:13px;background:#212121"></div>
<div class="abs" style="left:16px;top:696px;width:636px;height:3px;background:#191919;border-radius:1px"></div>
<div class="abs" style="left:5px;top:707px;width:672px;height:1px;background:#191919"></div>
<div id="nstatus">
<span style="left:7.0px;letter-spacing:-0.24px">length : 3738</span>
<span style="left:86.0px;letter-spacing:-0.37px">lines : 145</span>
<span style="left:142.0px;letter-spacing:-0.70px">Ln : 79</span>
<span style="left:187.5px;letter-spacing:-0.62px">Col : 20</span>
<span style="left:237.5px;letter-spacing:-0.65px">Sel : 0 | 0</span>
<span style="left:402.5px;letter-spacing:-0.15px">Macintosh</span>
<span style="left:512.5px;letter-spacing:-0.47px">UTF-8 w/o BOM</span>
<span style="left:632.5px;letter-spacing:-1.76px">INS</span>
</div>

</div>
<!--TASKBAR-->
<div id="task">
<div class="run" style="left:198px;top:2px;height:28px"></div><div class="run" style="left:244px;top:2px;height:28px"></div><div class="run" style="left:290px;top:2px;height:28px"></div><div class="run" style="left:336px;top:2px;height:28px"></div><div class="run" style="left:382px;top:2px;height:28px"></div>
<div class="abs" style="left:1351px;top:0;width:14px;height:30px;background:#1e1e1e;border-left:1px solid #262626"></div>
<svg class="abs" style="left:0;top:-7px" width="1365" height="37" viewBox="0 730 1365 37">
<defs>
<radialGradient id="orb" cx="0.5" cy="0.35" r="0.75"><stop offset="0" stop-color="#4a90cc"/><stop offset="0.55" stop-color="#1d5fa8"/><stop offset="1" stop-color="#0b3a80"/></radialGradient>
<radialGradient id="orbg" cx="0.5" cy="1" r="0.6"><stop offset="0" stop-color="#35d0ff" stop-opacity="0.9"/><stop offset="1" stop-color="#35d0ff" stop-opacity="0"/></radialGradient>
</defs>
<!-- start orb -->
<circle cx="27.200" cy="752.200" r="19" fill="url(#orb)" stroke="#8fbfe6" stroke-width="1"/>
<circle cx="27.200" cy="752.200" r="18" fill="url(#orbg)"/>
<path d="M10 747 A18 18 0 0 1 44.400 747 C36 741.500 19 741.500 10 747 Z" fill="#d6ecfb" opacity="0.400"/>
<path d="M17.500 742.500 C21 740 24.500 740 27.500 741.500 L25.500 750.500 C22.500 749 19 749.300 15.500 751.700 Z" fill="#ec5a24"/>
<path d="M29.500 742 C32.500 743.500 36 743.300 40 740.800 L38 749.800 C34.200 752.200 30.700 752.400 27.500 751 Z" fill="#8cc63f"/>
<path d="M15 753.700 C18.500 751.300 22 751 25 752.500 L23 761.500 C20 760 16.500 760.300 13 762.700 Z" fill="#2b93dd"/>
<path d="M27 753 C30.200 754.500 33.700 754.300 37.500 751.800 L35.500 760.800 C31.800 763.200 28.200 763.400 25 762 Z" fill="#fbbd22"/>
<!-- monitor icon -->
<rect x="76" y="746" width="13" height="10" rx="0.800" fill="#1a1a1a" stroke="#d9d9d9" stroke-width="1.200"/><path d="M77.500 752 L79.500 749 L81.500 753 L83.500 750 L85.500 752 L87.500 751" fill="none" stroke="#25d04a" stroke-width="1.100"/><rect x="80" y="757" width="5" height="1.500" fill="#bdbdbd"/><rect x="78.500" y="758.500" width="8" height="1.300" fill="#d0d0d0"/><rect x="73.500" y="749" width="2.500" height="11" fill="#cfcfcf"/><rect x="74" y="751" width="1.500" height="1.500" fill="#2ad04a"/>
<!-- squares icon -->
<path d="M120 749 L126.500 745.500 L130.500 752 L123.500 755.500 Z" fill="#5cc46a" stroke="#9be0a3" stroke-width="0.600"/><rect x="122.500" y="750.500" width="8" height="8" fill="#8cc1f3" stroke="#c3defa" stroke-width="0.600"/><path d="M127 754 L133.500 751.500 L135.300 758.500 L129 761 Z" fill="#f4d94a" stroke="#fbeb9a" stroke-width="0.600"/>
<!-- snipping tool -->
<ellipse cx="173" cy="751.500" rx="7.500" ry="6" fill="#f3efe9" stroke="#c6482e" stroke-width="1.800"/><path d="M166.500 755.500 C168 759 175 759.500 178 757" fill="none" stroke="#8a8a8a" stroke-width="1.500"/><path d="M171.500 748 L174.500 757 M175.500 748 L172.500 757" stroke="#444" stroke-width="1"/><circle cx="173" cy="759.500" r="1.500" fill="none" stroke="#1e9ae0" stroke-width="1"/><circle cx="177.500" cy="758.500" r="1.500" fill="none" stroke="#1e9ae0" stroke-width="1"/>
<!-- blue screen icon -->
<rect x="211.500" y="746.500" width="15" height="10.500" rx="1" fill="#3a8ee6" stroke="#2a6fc2" stroke-width="0.800"/><circle cx="217" cy="751" r="2.300" fill="#fff"/><circle cx="217.500" cy="750.500" r="1" fill="#f0a020"/><path d="M220.500 749.500 H224.500 M220.500 752 H224.500" stroke="#fff" stroke-width="1.100"/><ellipse cx="219" cy="759.300" rx="4" ry="1.800" fill="#d5d5d5"/><rect x="217.500" y="757" width="3" height="2" fill="#bdbdbd"/>
<!-- AIMP -->
<circle cx="265" cy="753.300" r="6.800" fill="#f5a413" stroke="#111" stroke-width="1.600"/><path d="M265 749.300 L269 756.500 H261 Z" fill="none" stroke="#111" stroke-width="1.700" stroke-linejoin="round"/>
<!-- chrome -->
<circle cx="311" cy="753" r="7.300" fill="#db4437"/><path d="M311 753 L304.700 756.650 A7.300 7.300 0 0 0 311 760.300 Z" fill="#0f9d58"/><path d="M311 753 L304.680 749.350 A7.300 7.300 0 0 0 311 760.300 L314.650 753 Z" fill="#0f9d58"/><path d="M311 753 L317.320 749.350 A7.300 7.300 0 0 1 311 760.300 Z" fill="#ffcd40"/><path d="M311 749.350 H317.320 A7.300 7.300 0 0 1 311 760.300 L314.200 754.800 Z" fill="#ffcd40"/><circle cx="311" cy="753" r="3.300" fill="#f1f1f1"/><circle cx="311" cy="753" r="2.600" fill="#4a8af4"/>
<!-- notepad++ -->
<rect x="350" y="747" width="11.500" height="13" fill="#fff" stroke="#d5d5d5" stroke-width="0.700"/><g fill="#555"><rect x="351.500" y="745.500" width="1.200" height="3"/><rect x="354" y="745.500" width="1.200" height="3"/><rect x="356.500" y="745.500" width="1.200" height="3"/><rect x="359" y="745.500" width="1.200" height="3"/></g><rect x="351.500" y="752.500" width="8.500" height="6" fill="#7ed321"/><rect x="351.500" y="755.500" width="8.500" height="3" fill="#4caf1a"/><path d="M357 757 L363 747 L365.300 748.400 L359.300 758.400 L356.500 759.600 Z" fill="#f3b52e" stroke="#b77a12" stroke-width="0.500"/><path d="M363 747 L364 745.300 L366.300 746.700 L365.300 748.400 Z" fill="#d8262c"/>
<!-- gimp -->
<path d="M397 753 C397 748.500 403 747.500 406 749 L409.500 747 L409.500 755 C409 758.500 401 759 398.500 756.500 Z" fill="#8f8878"/><circle cx="401.500" cy="752" r="2.200" fill="#fff"/><circle cx="406" cy="752" r="2.200" fill="#fff"/><circle cx="401.800" cy="752.300" r="1" fill="#000"/><circle cx="406.300" cy="752.300" r="1" fill="#000"/><circle cx="396.200" cy="753.500" r="1" fill="#e8e8e8"/>
<!-- tray -->
<path d="M1137 755.500 L1139.500 751.500 L1142 755.500 Z" fill="#3c3c3c"/>
<rect x="1157" y="747" width="1.800" height="15" fill="#d98a4a"/><path d="M1158.800 747 C1162 745 1165 749 1172 746.500 V755 C1166 757.500 1162 753.500 1158.800 755.500 Z" fill="#3fb54a"/>
<path d="M1183.500 749.500 H1193.500 L1192.500 760 H1184.500 Z" fill="#1b1b1b" stroke="#f2f2f2" stroke-width="1.400" stroke-linejoin="round"/><path d="M1182.500 748.300 H1194.500" stroke="#f2f2f2" stroke-width="1.400"/><path d="M1186 757.500 H1191" stroke="#22c8e8" stroke-width="1.600"/>
<g fill="#6a6a6a"><rect x="1205" y="757" width="2" height="2.500"/><rect x="1208.500" y="755" width="2" height="4.500"/><rect x="1212" y="752.500" width="2" height="7"/><rect x="1215.500" y="750" width="2" height="9.500"/><rect x="1219" y="747.500" width="1.500" height="12"/></g><path d="M1212.500 754 L1219.500 761 M1219.500 754 L1212.500 761" stroke="#e81414" stroke-width="1.800"/>
<rect x="1229" y="748.500" width="9" height="11.500" rx="1" fill="none" stroke="#f0f0f0" stroke-width="1.400"/><path d="M1235.500 747 V750 M1240 747 V750" stroke="#f0f0f0" stroke-width="1.300"/><path d="M1233.500 750 H1242 V753 C1242 755 1240.500 756 1238 756 V759 H1237 V756 C1235 756 1233.500 755 1233.500 753 Z" fill="#f0f0f0"/>
<path d="M1255 751 H1258 L1262 747 V761 L1258 757 H1255 Z" fill="#f2f2f2"/><path d="M1264.500 750.500 C1266.500 752.500 1266.500 755.500 1264.500 757.500" fill="none" stroke="#f2f2f2" stroke-width="1.300"/>
<g style="font:12px 'Liberation Sans',sans-serif" fill="#4c4c4c"><text x="1104" y="754.800" textLength="16" lengthAdjust="spacingAndGlyphs">RU</text><text x="1299.500" y="758.200" textLength="27" lengthAdjust="spacingAndGlyphs">15:20</text></g>
</svg>

</div>
</body>
</html>
